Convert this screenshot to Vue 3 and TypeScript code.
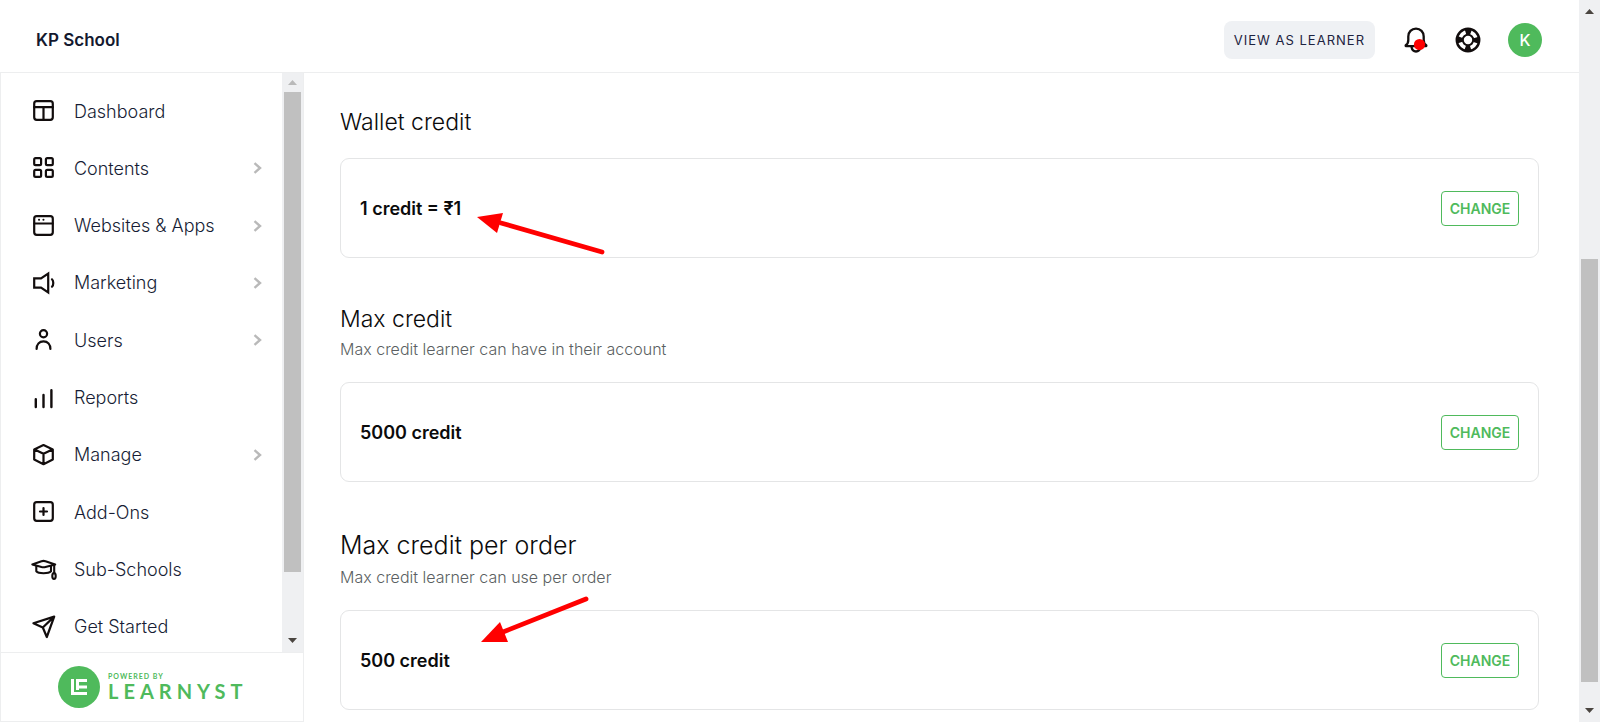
<script setup lang="ts">
interface NavItem {
  label: string
  icon: string
  expandable: boolean
}

interface CreditSetting {
  title: string
  hint?: string
  value: string
  large?: boolean
  arrow?: 'down' | 'up'
}

const navItems: NavItem[] = [
  { label: 'Dashboard', icon: 'dashboard', expandable: false },
  { label: 'Contents', icon: 'contents', expandable: true },
  { label: 'Websites & Apps', icon: 'websites', expandable: true },
  { label: 'Marketing', icon: 'marketing', expandable: true },
  { label: 'Users', icon: 'users', expandable: true },
  { label: 'Reports', icon: 'reports', expandable: false },
  { label: 'Manage', icon: 'manage', expandable: true },
  { label: 'Add-Ons', icon: 'addons', expandable: false },
  { label: 'Sub-Schools', icon: 'schools', expandable: false },
  { label: 'Get Started', icon: 'start', expandable: false },
]

const settings: CreditSetting[] = [
  { title: 'Wallet credit', value: '1 credit = ₹1', arrow: 'down' },
  { title: 'Max credit', hint: 'Max credit learner can have in their account', value: '5000 credit' },
  { title: 'Max credit per order', hint: 'Max credit learner can use per order', value: '500 credit', large: true, arrow: 'up' },
]
</script>

<template>
  <div class="shell">
    <div class="page">
      <header class="topbar">
        <div class="school">KP School</div>
        <button class="view-btn" type="button">VIEW AS LEARNER</button>
        <button class="icon-btn" type="button" aria-label="Notifications">
          <svg width="26" height="26" viewBox="0 0 26 26" fill="none" stroke="#120d0d" stroke-width="2.3" stroke-linejoin="round" stroke-linecap="round">
            <path d="M6.300 13V9.500C6.300 5 9.500 1.700 14 1.700s7.700 3.300 7.700 7.800V13c0 2.600.8 4.300 2.600 5.300v.8H3.700v-.8C5.500 17.300 6.300 15.600 6.300 13Z" />
            <path d="M9.600 20.300c.5 2.700 2.200 4.200 4.400 4.200s3.900-1.500 4.400-4.200" />
            <circle cx="17.500" cy="17.500" r="5.600" fill="#f00" stroke="none" />
          </svg>
        </button>
        <button class="icon-btn" type="button" aria-label="Help">
          <svg width="26" height="26" viewBox="0 0 26 26" fill="none" stroke="#120d0d">
            <circle cx="13" cy="13" r="11.200" stroke-width="2.500" />
            <circle cx="13" cy="13" r="5.200" stroke-width="2" />
            <circle cx="13" cy="13" r="8.500" stroke-width="5.400" stroke-dasharray="5.650 7.700" stroke-dashoffset="2.820" />
          </svg>
        </button>
        <button class="avatar" type="button" aria-label="Account">K</button>
      </header>

      <div class="body">
        <aside class="sidebar">
          <div class="nav-wrap">
            <nav class="nav" aria-label="Main">
              <a v-for="item in navItems" :key="item.label" class="nav-link" href="#">
                <svg class="nav-icon" width="26" height="26" viewBox="0 0 26 26" fill="none" stroke="#120d0d" stroke-width="2.200" stroke-linecap="round" stroke-linejoin="round" aria-hidden="true">
                  <g v-if="item.icon === 'dashboard'">
                    <rect x="3.200" y="3.200" width="18.600" height="18.600" rx="2.500" />
                    <path d="M3.200 9.200H21.800M12.500 9.200V21.800" />
                  </g>
                  <g v-else-if="item.icon === 'contents'">
                    <rect x="3.200" y="3.200" width="6.900" height="6.900" rx="1.400" />
                    <rect x="14.900" y="3.200" width="6.900" height="6.900" rx="1.400" />
                    <rect x="3.200" y="14.900" width="6.900" height="6.900" rx="1.400" />
                    <rect x="14.900" y="14.900" width="6.900" height="6.900" rx="1.400" />
                  </g>
                  <g v-else-if="item.icon === 'websites'">
                    <rect x="3.200" y="3.200" width="18.600" height="18.600" rx="2.500" />
                    <path d="M3.200 10.500H21.800" stroke-width="1.800" />
                    <path d="M8 6.800h.1M12.400 6.800h.1" stroke-width="2" />
                  </g>
                  <g v-else-if="item.icon === 'marketing'">
                    <path d="M3.200 8.300H10L17.200 3.600V22.400L10 17.700H3.200Z" stroke-linejoin="miter" />
                    <path d="M21 9.300c1.700 1.600 1.700 5.800 0 7.400" />
                  </g>
                  <g v-else-if="item.icon === 'users'">
                    <circle cx="12.500" cy="6.800" r="3.600" />
                    <path d="M5.600 22C5.600 17.300 8.300 14.400 12.500 14.400S19.400 17.300 19.400 22" />
                  </g>
                  <g v-else-if="item.icon === 'reports'">
                    <path d="M4.800 14.200V22M12.500 10V22M20.400 5.200V22" stroke-width="2.400" />
                  </g>
                  <g v-else-if="item.icon === 'manage'">
                    <path d="M12.500 3L21.800 7.400V17.600L12.500 22.200L3.200 17.600V7.400ZM3.600 7.600L12.500 11.800L21.400 7.600M12.500 11.800V22" />
                  </g>
                  <g v-else-if="item.icon === 'addons'">
                    <rect x="3.200" y="3.200" width="18.600" height="18.600" rx="2.500" />
                    <path d="M9 12.500H16M12.500 9V16" />
                  </g>
                  <g v-else-if="item.icon === 'schools'" stroke-width="2.100">
                    <path d="M1.300 7.400L10.500 4.200Q12.500 3.600 14.500 4.200L24.200 7.400L14.500 10Q12.500 10.500 10.500 10L1.300 7.400Z" />
                    <path d="M5.300 9.300V14.300C7.500 16.800 17.500 16.800 20 14.300V9.300M23.200 8V15.500" />
                    <ellipse cx="23" cy="19" rx="1.700" ry="2.900" />
                  </g>
                  <g v-else>
                    <path d="M23.200 2.600L15.800 23L11.800 13.500L2.400 9.300ZM23.200 2.600L11.800 13.500" />
                  </g>
                </svg>
                <span class="nav-label">{{ item.label }}</span>
                <svg v-if="item.expandable" class="chevron" width="10" height="12" viewBox="0 0 10 12" fill="none" stroke="#b9b9b9" stroke-width="2.400" aria-hidden="true">
                  <path d="M1.500 1.200L7 6L1.500 10.800" />
                </svg>
              </a>
            </nav>
            <div class="scroll side-scroll" aria-hidden="true">
              <svg width="21" height="19" viewBox="0 0 21 19"><path d="M6 12L10.500 7L15 12Z" fill="#b9b9b9" /></svg>
              <div class="thumb"></div>
              <svg class="scroll-end" width="21" height="22" viewBox="0 0 21 22"><path d="M6 8L10.500 13L15 8Z" fill="#4a4540" /></svg>
            </div>
          </div>
          <div class="brand">
            <svg width="42" height="42" viewBox="0 0 42 42" aria-hidden="true">
              <circle cx="21" cy="21" r="21" fill="#4fba5c" />
              <path d="M14.500 13V27.500H29" fill="none" stroke="#fff" stroke-width="3" />
              <path d="M29 14.500H19.500V21H29M19.500 21V24" fill="none" stroke="#fff" stroke-width="3" />
            </svg>
            <div class="brand-text">
              <span class="brand-small">POWERED BY</span>
              <span class="brand-name">LEARNYST</span>
            </div>
          </div>
        </aside>

        <main class="content">
          <section v-for="s in settings" :key="s.title" class="setting">
            <h2 class="title" :class="{ large: s.large }">{{ s.title }}</h2>
            <p v-if="s.hint" class="hint">{{ s.hint }}</p>
            <div class="card">
              <strong class="value">{{ s.value }}</strong>
              <button class="change" type="button" :aria-label="'CHANGE ' + s.title">CHANGE</button>
              <svg v-if="s.arrow === 'down'" class="arrow arrow-down" width="130" height="46" viewBox="0 0 130 46" aria-hidden="true">
                <path d="M24 14L125 43" stroke="#f00" stroke-width="4.800" stroke-linecap="round" />
                <path d="M0 8L26 4L20 24Z" fill="#f00" />
              </svg>
              <svg v-else-if="s.arrow === 'up'" class="arrow arrow-up" width="112" height="50" viewBox="0 0 112 50" aria-hidden="true">
                <path d="M22 37L105 4" stroke="#f00" stroke-width="4.800" stroke-linecap="round" />
                <path d="M0 47L19 27L27 47Z" fill="#f00" />
              </svg>
            </div>
          </section>
        </main>
      </div>
    </div>
    <div class="scroll page-scroll" aria-hidden="true">
      <svg width="21" height="20" viewBox="0 0 21 20"><path d="M6 14L10.500 9L15 14Z" fill="#4a4540" /></svg>
      <div class="thumb"></div>
      <svg class="scroll-end" width="21" height="20" viewBox="0 0 21 20"><path d="M6 6L10.500 11L15 6Z" fill="#4a4540" /></svg>
    </div>
  </div>
</template>

<style>
body {
  margin: 0;
  background: #fff;
}
</style>

<style scoped>
.shell {
  display: flex;
  height: 100vh;
  overflow: hidden;
  font-family: Inter, "Liberation Sans", sans-serif;
  color: #0b0b0c;
}
.shell * {
  box-sizing: border-box;
}
button {
  font-family: inherit;
  cursor: pointer;
  padding: 0;
}
.page {
  flex: 1;
  min-width: 0;
  display: flex;
  flex-direction: column;
}
.topbar {
  display: flex;
  align-items: center;
  gap: 27px;
  flex: none;
  padding: 21px 37px 13px 36px;
  border-bottom: 1px solid #edeeef;
}
.school {
  flex: 1;
  font-size: 17px;
  font-weight: 600;
  color: #14192f;
}
.view-btn {
  height: 38px;
  padding: 0 10px;
  border: 0;
  border-radius: 8px;
  background: #eff1f4;
  color: #1d2340;
  font-size: 13px;
  letter-spacing: 1px;
}
.icon-btn {
  display: flex;
  border: 0;
  background: none;
}
.avatar {
  width: 34px;
  height: 34px;
  border: 0;
  border-radius: 50%;
  background: #4fba5c;
  color: #fff;
  font-size: 16px;
  font-weight: 500;
}
.body {
  flex: 1;
  min-height: 0;
  display: flex;
}
.sidebar {
  flex: none;
  width: 304px;
  display: flex;
  flex-direction: column;
  border: 1px solid #edeeef;
  border-top: 0;
}
.nav-wrap {
  flex: 1;
  min-height: 0;
  display: flex;
}
.nav {
  flex: 1;
  display: flex;
  flex-direction: column;
  justify-content: space-between;
  padding: 18px 19px 5px 30px;
}
.nav-link {
  display: flex;
  align-items: center;
  height: 40px;
  color: #171d35;
  font-size: 18px;
  font-weight: 300;
  text-decoration: none;
}
.nav-label {
  flex: 1;
  margin-left: 17px;
}
.scroll {
  flex: none;
  display: grid;
  background: #eff0f2;
}
.scroll-end {
  grid-row: 4;
}
.thumb {
  grid-row: 3;
  margin: 0 2px;
  background: #c0c0c0;
}
.side-scroll {
  width: 21px;
  grid-template-rows: 19px 0 480fr 80fr;
}
.side-scroll .scroll-end {
  align-self: end;
}
.page-scroll {
  width: 21px;
  grid-template-rows: 20px 239fr 423fr 40fr;
}
.page-scroll .scroll-end {
  align-self: end;
}
.brand {
  display: flex;
  align-items: center;
  gap: 8px;
  height: 69px;
  padding-left: 57px;
  border-top: 1px solid #edeeef;
  color: #4fba5c;
  font-family: Lato, Inter, sans-serif;
  font-weight: 700;
}
.brand-text {
  display: flex;
  flex-direction: column;
}
.brand-small {
  font-size: 7px;
  line-height: 8px;
  letter-spacing: 1px;
}
.brand-name {
  font-size: 20px;
  line-height: 22px;
  letter-spacing: 5px;
}
.content {
  flex: 1;
  min-width: 0;
  display: flex;
  flex-direction: column;
  gap: 44px;
  padding: 32px 40px 12px 36px;
}
.title {
  margin: 0;
  font-size: 23px;
  line-height: 34px;
  font-weight: 300;
}
.title.large {
  font-size: 25px;
  line-height: 38px;
}
.hint {
  margin: 0;
  font-size: 16px;
  line-height: 27px;
  font-weight: 300;
  color: #5b5f62;
}
.card {
  position: relative;
  display: flex;
  align-items: center;
  justify-content: space-between;
  height: 100px;
  margin-top: 19px;
  padding: 0 19px;
  border: 1px solid #e4e5e6;
  border-radius: 9px;
}
.value {
  font-size: 18px;
  font-weight: 600;
}
.change {
  width: 78px;
  height: 35px;
  border: 1px solid #4fba5c;
  border-radius: 4px;
  background: #fff;
  color: #4fba5c;
  font-size: 14px;
  font-weight: 600;
}
.arrow {
  position: absolute;
  fill: none;
}
.arrow-down {
  left: 136px;
  top: 50px;
}
.arrow-up {
  left: 140px;
  top: -16px;
}
</style>
